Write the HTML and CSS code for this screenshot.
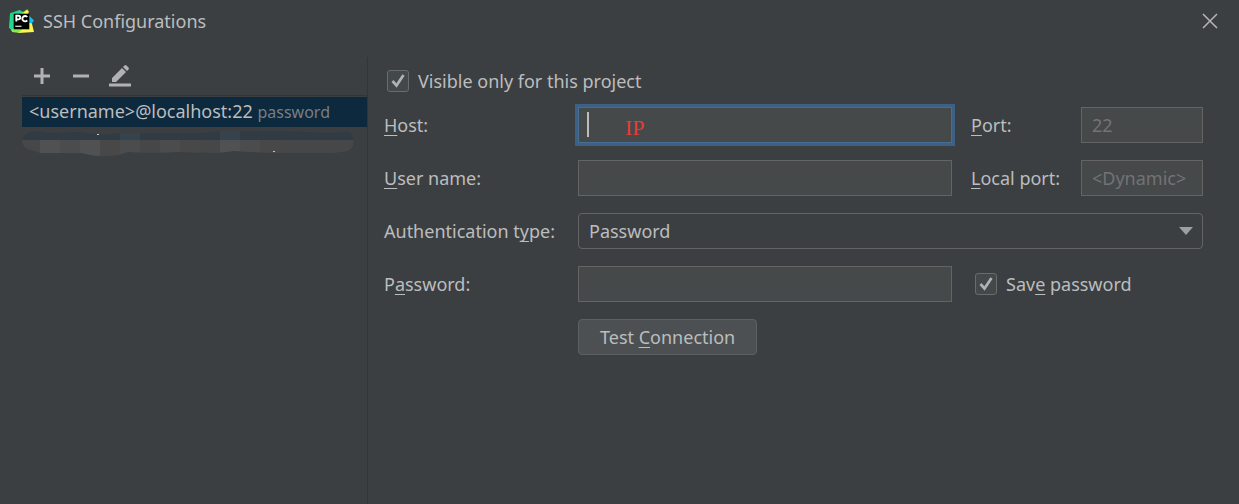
FILE: index.html
```
<!DOCTYPE html>
<html lang="en">
<head>
<meta charset="utf-8">
<title>SSH Configurations</title>
<link rel="stylesheet" href="styles.css">
</head>
<body>
<div class="dialog">
  <header class="titlebar">
    <svg class="logo" viewBox="0 0 24 24" aria-hidden="true">
      <path fill="#21d789" d="M1 4 10 1l4 2 2 3-3 15-9 1-4-4z"/>
      <path fill="#8bea4b" d="M13 3l5-3-1 6-7-1zM2 20l7-4 6 2-5 5-7-1z"/>
      <path fill="#07c3f2" d="M19 6l5 5-3 4-3-1z"/>
      <path fill="#fcf84a" d="M14 4l3-3 2 1-1 6zM18 13l4 1 2 8-15 1 5-5z"/>
      <path fill="#000" d="M4.500 4.500h15v15h-15z"/>
      <path fill="none" stroke="#fff" stroke-width="1.8" d="M7 12V6.500h2.100a1.700 1.700 0 0 1 0 3.400H7.200M17.500 7.700a2.600 2.600 0 1 0 0 3.200"/>
      <path fill="#ddd" d="M6 16h6v1.200H6z"/>
    </svg>
    <h1 class="title">SSH Configurations</h1>
    <button class="icon-button" type="button" aria-label="Close">
      <svg width="16" height="16" viewBox="0 0 16 16"><path d="M1 1l14 14M15 1 1 15" fill="none" stroke="#b4b6b7" stroke-width="1.5"/></svg>
    </button>
  </header>
  <div class="content">
    <aside class="sidebar">
      <div class="toolbar">
        <button class="icon-button" type="button" aria-label="Add">
          <svg width="22" height="22" viewBox="0 0 22 22"><path d="M11 3v16M3 11h16" fill="none" stroke="#afb1b3" stroke-width="3"/></svg>
        </button>
        <button class="icon-button" type="button" aria-label="Remove">
          <svg width="22" height="22" viewBox="0 0 22 22"><path d="M3 11h16" fill="none" stroke="#afb1b3" stroke-width="3"/></svg>
        </button>
        <button class="icon-button" type="button" aria-label="Edit">
          <svg width="22" height="22" viewBox="0 0 22 22"><path fill="#afb1b3" d="M3 13 13 3l4 4L7 17H3zM14 2l1.500-1.500q1-.8 2 0l2 2q.8 1 0 2L18 6zM0 18.500h22v3H0z"/></svg>
        </button>
      </div>
      <ul class="list">
        <li class="item selected">&lt;username&gt;@localhost:22 <span class="hint">password</span></li>
        <li class="item masked">
          <svg class="mask" viewBox="0 0 332 26" preserveAspectRatio="none" aria-hidden="true">
            <clipPath id="smear"><path d="M0 9Q2 1 14 0L26 2 58 1 78 4 98 2H180L198 0H262L308 2 328 1Q336 14 326 20L312 22H248L212 20 195 22 155 21 130 22 106 21 96 24Q75 27 60 22L18 22 9 19Q0 17 0 9z"/></clipPath>
            <g clip-path="url(#smear)">
              <path fill="#303b44" d="M0 0h332v9H0z"/>
              <path fill="#34434e" d="M98 0h20v9H98zM198 0h20v9h-20z"/>
              <path fill="#464748" d="M0 9h332v17H0z"/>
              <path fill="#505153" d="M18 9h20v17H18zM58 9h20v17H58zM198 9h20v17h-20z"/>
              <path fill="#4b4c4e" d="M38 9h20v17H38zM98 9h20v17H98zM138 9h20v17h-20zM218 9h20v17h-20z"/>
              <path fill="#484849" d="M78 9h20v17H78zM158 9h20v17h-20zM238 9h20v17h-20z"/>
            </g>
            <path fill="#c5c8ca" d="M75 3h2v1h-2zM251 20h2v1h-2z"/>
          </svg>
        </li>
      </ul>
    </aside>
    <form class="form">
      <label class="check"><input class="checkbox" type="checkbox" checked><span>Visible only for this project</span></label>
      <div class="fields">
        <label for="host"><u>H</u>ost:</label>
        <div class="host">
          <input class="field focused" id="host" type="text">
          <span class="caret"></span>
          <span class="note">IP</span>
        </div>
        <label class="second" for="port"><u>P</u>ort:</label>
        <input class="field" id="port" type="text" placeholder="22">

        <label for="user"><u>U</u>ser name:</label>
        <input class="field" id="user" type="text">
        <label class="second" for="local"><u>L</u>ocal port:</label>
        <input class="field" id="local" type="text" placeholder="&lt;Dynamic&gt;">

        <label for="auth">Authentication t<u>y</u>pe:</label>
        <div class="select-wrap">
          <select class="select" id="auth"><option>Password</option></select>
          <svg class="arrow" width="14" height="8" viewBox="0 0 14 8" aria-hidden="true"><path d="M0 0h14L7 8z" fill="#9da0a2"/></svg>
        </div>

        <label for="pass">P<u>a</u>ssword:</label>
        <input class="field" id="pass" type="password">
        <label class="check save"><input class="checkbox" type="checkbox" checked><span>Sav<u>e</u> password</span></label>

        <button class="test" type="button">Test <u>C</u>onnection</button>
      </div>
    </form>
  </div>
</div>
</body>
</html>
```
FILE: styles.css
```
* { box-sizing: border-box; }

body {
  margin: 0;
  background: #3c3f41;
  color: #bbbdbf;
  font: 18px/24px "Noto Sans", "Open Sans", sans-serif;
}

u {
  text-decoration-thickness: 1px;
  text-underline-offset: 3px;
  text-decoration-skip-ink: none;
}

.dialog {
  display: flex;
  flex-direction: column;
  min-height: 100vh;
}

.titlebar {
  display: flex;
  align-items: center;
  gap: 9px;
  height: 42px;
  padding: 0 21px 0 9px;
}

.logo { width: 25px; height: 25px; }

.title {
  flex: 1;
  margin: 0;
  font-size: 18px;
  font-weight: 400;
}

.icon-button {
  display: flex;
  padding: 0;
  border: 0;
  background: none;
}

.content {
  display: flex;
  flex: 1;
  padding-top: 15px;
}

.sidebar {
  width: 368px;
  flex-shrink: 0;
  padding-left: 22px;
  border-right: 1px solid #323435;
}

.toolbar {
  display: flex;
  align-items: center;
  gap: 17px;
  height: 38px;
  padding-left: 9px;
}

.list {
  margin: 0;
  padding: 1px 0 0;
  border-top: 1px solid #323435;
  list-style: none;
}

.item { height: 30px; }

.selected {
  padding: 2px 7px;
  background: #0d293e;
  white-space: nowrap;
}

.hint { color: #787e82; font-size: 16px; }

.masked { padding: 4px 13px 0 0; }

.mask { display: block; width: 100%; height: 26px; }

.form {
  flex: 1;
  padding: 12px 36px 24px 16px;
}

.check {
  display: flex;
  align-items: center;
  gap: 9px;
}

.form > .check { width: max-content; padding-left: 3px; }

.checkbox {
  appearance: none;
  width: 22px;
  height: 22px;
  margin: 0;
  border: 1px solid #6b6b6b;
  border-radius: 3px;
  background: #43494a;
}

.checkbox:checked {
  background-image: url("data:image/svg+xml,%3Csvg xmlns='http://www.w3.org/2000/svg' viewBox='0 0 20 20'%3E%3Cpath d='M4.500 10 8.500 14.500 15.500 4' fill='none' stroke='%23afb1b3' stroke-width='2.700'/%3E%3C/svg%3E");
}

.fields {
  display: grid;
  grid-template-columns: 194px 1fr 129px 122px;
  row-gap: 17px;
  align-items: center;
  padding-top: 14px;
}

.second { padding-left: 19px; }

.field {
  display: block;
  width: 100%;
  height: 36px;
  padding: 0 10px;
  border: 1px solid #646464;
  border-radius: 0;
  outline: 0;
  background: #45494a;
  color: #bbbdbf;
  font: inherit;
}

.field::placeholder { color: #727374; opacity: 1; }

.focused {
  border-color: #466d94;
  box-shadow: 0 0 0 3px #3d6185;
}

.host { position: relative; }

.caret {
  position: absolute;
  top: 5px;
  left: 9px;
  width: 2px;
  height: 25px;
  background: #bbbdbf;
}

.note {
  position: absolute;
  top: 9px;
  left: 47px;
  color: #e83a3a;
  font: 22px/24px "Liberation Serif", serif;
}

.select-wrap { position: relative; grid-column: 2 / -1; }

.select {
  appearance: none;
  display: block;
  width: 100%;
  height: 36px;
  padding: 0 10px;
  border: 1px solid #646464;
  border-radius: 4px;
  background: #3c3f41;
  color: inherit;
  font: inherit;
}

.arrow {
  position: absolute;
  top: 14px;
  right: 10px;
  pointer-events: none;
}

.save { grid-column: 3 / -1; padding-left: 23px; }

.test {
  grid-column: 2;
  justify-self: start;
  height: 36px;
  padding: 0 21px;
  border: 1px solid #5e6060;
  border-radius: 4px;
  background: #4c5052;
  color: inherit;
  font: inherit;
}
```
